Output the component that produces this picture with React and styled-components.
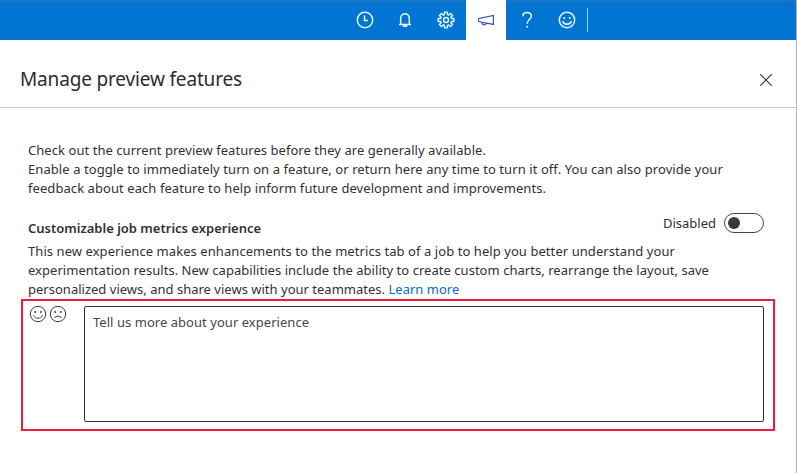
import React from 'react';
import styled, { createGlobalStyle } from 'styled-components';

const GlobalStyle = createGlobalStyle`
  * { box-sizing: border-box; }
  body { margin: 0; background: #fff; font-family: "Noto Sans", "Open Sans", sans-serif; }
`;

const Page = styled.div`
  width: 797px;
  height: 473px;
  display: flex;
  flex-direction: column;
  overflow: hidden;
  color: #323130;
  border-right: 1px solid #b5b5b5;
`;

const TopBar = styled.header`
  height: 40px;
  flex: none;
  display: flex;
  align-items: center;
  padding-left: 344px;
  background: #0275d2;
  box-shadow: inset 0 1px #2a73b3;
`;

const BarButton = styled.div`
  width: ${(p) => p.$width || 41}px;
  height: 40px;
  display: flex;
  align-items: center;
  justify-content: center;
  color: ${(p) => (p.$active ? '#3c58ad' : '#e4fbff')};
  background: ${(p) => (p.$active ? '#fff' : 'transparent')};
`;

const BarDivider = styled.div`
  width: 1px;
  height: 24px;
  background: #a9d6f5;
`;

const Icon = styled.svg`
  display: block;
  flex: none;
  fill: none;
  stroke: currentColor;
  stroke-width: ${(p) => p.$stroke || 1.3};
`;

const PanelHeader = styled.div`
  height: 68px;
  flex: none;
  display: flex;
  align-items: center;
  justify-content: space-between;
  padding: 12px 24px 0 20px;
  border-bottom: 1px solid #c8c8c8;
`;

const Title = styled.h1`
  margin: 0 0 1px;
  font-size: 19px;
  line-height: 26px;
  font-weight: 400;
  letter-spacing: -0.16px;
  color: #2b2b2b;
`;

const Body = styled.main`
  display: flex;
  flex-direction: column;
  padding: 33px 21px 0;
`;

const Paragraph = styled.p`
  margin: 0;
  padding-left: 7px;
  display: flex;
  flex-direction: column;
`;

const Line = styled.span`
  display: block;
  font-size: 13px;
  line-height: 19px;
  white-space: nowrap;
  letter-spacing: ${(p) => p.$track || 0}px;
`;

const Link = styled.a`
  color: #0f69c4;
`;

const FeatureHeader = styled.div`
  display: flex;
  justify-content: space-between;
  height: 29px;
  margin-top: 15px;
  padding: 0 11px 0 7px;
`;

const FeatureName = styled.h2`
  margin: 6px 0 0;
  font-size: 13px;
  line-height: 19px;
  font-weight: 600;
  color: #323130;
`;

const ToggleGroup = styled.div`
  display: flex;
  align-items: center;
  height: 20px;
  gap: 8px;
`;

const Toggle = styled.div`
  width: 40px;
  height: 20px;
  border: 1px solid #444;
  border-radius: 10px;
  padding: 3px;
`;

const Knob = styled.div`
  width: 12px;
  height: 12px;
  border-radius: 50%;
  background: #3b3a39;
`;

const FeedbackBox = styled.section`
  width: 754px;
  height: 132px;
  display: flex;
  border: 2px solid #f01c3a;
  padding: 5px 9px 7px 6px;
`;

const Faces = styled.div`
  display: flex;
  gap: 2px;
  width: 55px;
  height: 18px;
  margin-top: -1px;
  color: #3b3a39;
`;

const Comment = styled.div`
  flex: 1;
  height: 116px;
  border: 1px solid #333;
  border-radius: 2px;
  padding: 6px 8px;
  color: #484644;
`;

const Face = ({ sad, stroke = 1 }) => (
  <Icon width="18" height="18" viewBox="0 0 18 18" $stroke={stroke}>
    <circle cx="9" cy="9" r="7.7" />
    <circle cx="6.2" cy="7" r="1" fill="currentColor" stroke="none" />
    <circle cx="11.8" cy="7" r="1" fill="currentColor" stroke="none" />
    <path d={sad ? 'M5.4 13C7 10.5 11 10.5 12.6 13' : 'M4.6 10.3C6 14.3 12 14.3 13.4 10.3'} />
  </Icon>
);

const teeth = Array.from({ length: 8 }, (_, i) => {
  const at = (r, deg) => {
    const a = ((i * 45 + deg) * Math.PI) / 180;
    return `${(9 + r * Math.cos(a)).toFixed(2)} ${(9 + r * Math.sin(a)).toFixed(2)}`;
  };
  return `${at(5.6, -15)}L${at(8, -11)}L${at(8, 11)}L${at(5.6, 15)}`;
});
const gearPath = `M${teeth.join('L')}Z`;

export default function App() {
  return (
    <>
      <GlobalStyle />
      <Page>
        <TopBar>
          <BarButton>
            <Icon width="18" height="18" viewBox="0 0 18 18" $stroke={1.5}>
              <circle cx="9" cy="9" r="7.7" />
              <path d="M8.5 4.5V9.5H12" />
            </Icon>
          </BarButton>
          <BarButton $width={40}>
            <Icon width="18" height="18" viewBox="0 0 18 18" $stroke={1.5}>
              <path d="M4.7 13.5V7a4.3 4.3 0 0 1 8.6 0V13.5M3 13.5H15M7.5 14v1.3h3V14" />
            </Icon>
          </BarButton>
          <BarButton>
            <Icon width="18" height="18" viewBox="0 0 18 18" $stroke={1.4}>
              <path d={gearPath} strokeLinejoin="round" />
              <circle cx="9" cy="9" r="2.5" />
            </Icon>
          </BarButton>
          <BarButton $width={40} $active>
            <Icon width="18" height="18" viewBox="0 0 18 18" $stroke={1.2}>
              <path d="M1.5 7.7L16.4 4.4V13.4L1.5 10.5ZM5 11.3C5.1 14.5 9 14.5 9.2 12.2" />
            </Icon>
          </BarButton>
          <BarButton>
            <Icon width="18" height="18" viewBox="0 0 18 18" $stroke={1.5}>
              <path d="M4.9 5.2C5.1 0.2 13.4 0.3 13.3 5.2C13.2 8.2 9.2 8.4 9.2 12.8" />
              <circle cx="9.2" cy="15.8" r="1" fill="currentColor" stroke="none" />
            </Icon>
          </BarButton>
          <BarButton $width={40}>
            <Face stroke={1.5} />
          </BarButton>
          <BarDivider />
        </TopBar>

        <PanelHeader>
          <Title>Manage preview features</Title>
          <Icon width="12" height="12" viewBox="0 0 12 12" $stroke={1.1}>
            <path d="M0.3 0.3L11.7 11.7M11.7 0.3L0.3 11.7" />
          </Icon>
        </PanelHeader>

        <Body>
          <Paragraph>
            <Line $track={0.053}>Check out the current preview features before they are generally available.</Line>
            <Line $track={0.077}>Enable a toggle to immediately turn on a feature, or return here any time to turn it off. You can also provide your</Line>
            <Line $track={0.07}>feedback about each feature to help inform future development and improvements.</Line>
          </Paragraph>

          <FeatureHeader>
            <FeatureName>Customizable job metrics experience</FeatureName>
            <ToggleGroup>
              <Line>Disabled</Line>
              <Toggle><Knob /></Toggle>
            </ToggleGroup>
          </FeatureHeader>

          <Paragraph>
            <Line $track={0.067}>This new experience makes enhancements to the metrics tab of a job to help you better understand your</Line>
            <Line $track={0.037}>experimentation results. New capabilities include the ability to create custom charts, rearrange the layout, save</Line>
            <Line $track={0.01}>personalized views, and share views with your teammates. <Link>Learn more</Link></Line>
          </Paragraph>

          <FeedbackBox>
            <Faces>
              <Face />
              <Face sad />
            </Faces>
            <Comment>
              <Line $track={0.04}>Tell us more about your experience</Line>
            </Comment>
          </FeedbackBox>
        </Body>
      </Page>
    </>
  );
}
